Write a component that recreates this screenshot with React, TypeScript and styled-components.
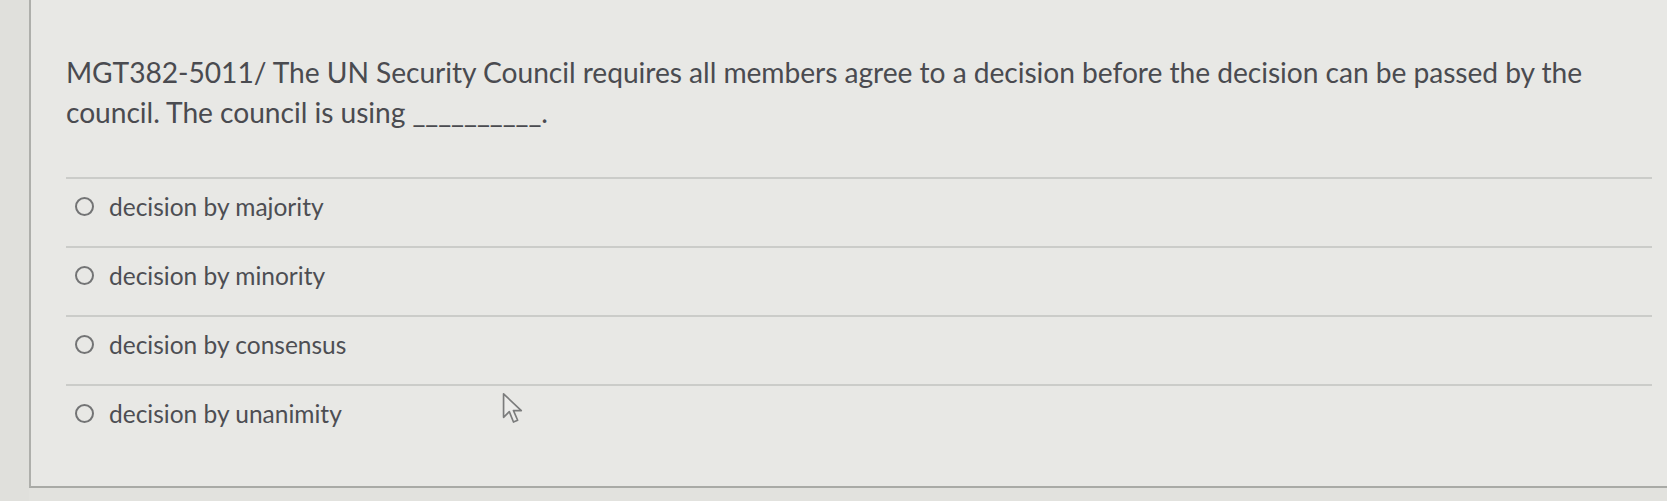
import React from "react";
import styled, { createGlobalStyle } from "styled-components";

const Global = createGlobalStyle`
  html, body { margin: 0; padding: 0; }
  body {
    background: #e2e2de;
    font-family: Lato, "Noto Sans", sans-serif;
    width: 1667px;
    height: 501px;
    overflow: hidden;
  }
`;

const Page = styled.div`
  display: flex;
  height: 501px;
  position: relative;
`;

const Gutter = styled.div`
  width: 29px;
  flex: none;
  background: #e0e0dc;
`;

const Panel = styled.div`
  flex: 1;
  height: 488px;
  box-sizing: border-box;
  background: #e8e8e5;
  border-left: 2px solid #aeafab;
  border-bottom: 2px solid #a9aaa6;
  padding: 52px 15px 0 35px;
  display: flex;
  flex-direction: column;
`;

const Question = styled.div`
  font-size: 28.2px;
  line-height: 40px;
  color: #4a4b50;
  padding-bottom: 45px;
  letter-spacing: -0.05px;
`;

const Options = styled.div`
  display: flex;
  flex-direction: column;
`;

const Option = styled.label`
  display: flex;
  align-items: center;
  gap: 15px;
  height: 69px;
  box-sizing: border-box;
  border-top: 2px solid #cbccc9;
  padding: 0 0 13px 9px;
  font-size: 24.5px;
  color: #4d4e53;
`;

const Radio = styled.span`
  width: 15px;
  height: 15px;
  flex: none;
  border-radius: 50%;
  border: 2.5px solid #737475;
`;

const Cursor = styled.svg`
  position: absolute;
  left: 502px;
  top: 392px;
  width: 24px;
  height: 34px;
`;

const options = [
  "decision by majority",
  "decision by minority",
  "decision by consensus",
  "decision by unanimity",
];

export default function App() {
  return (
    <>
      <Global />
      <Page>
        <Gutter />
        <Panel>
          <Question>
            MGT382-5011/ The UN Security Council requires all members agree to a decision before the decision can be passed by the council. The council is using __________.
          </Question>
          <Options>
            {options.map((o) => (
              <Option key={o}>
                <Radio />
                {o}
              </Option>
            ))}
          </Options>
        </Panel>
        <Cursor viewBox="0 0 23 32">
          <path
            d="M1.5 1.5 L1.5 24 L7 18.5 L11 28.5 L15 26.8 L11 17.5 L18.5 17.5 Z"
            fill="#ececea"
            stroke="#7b7c7c"
            strokeWidth="1.6"
            strokeLinejoin="round"
          />
        </Cursor>
      </Page>
    </>
  );
}
